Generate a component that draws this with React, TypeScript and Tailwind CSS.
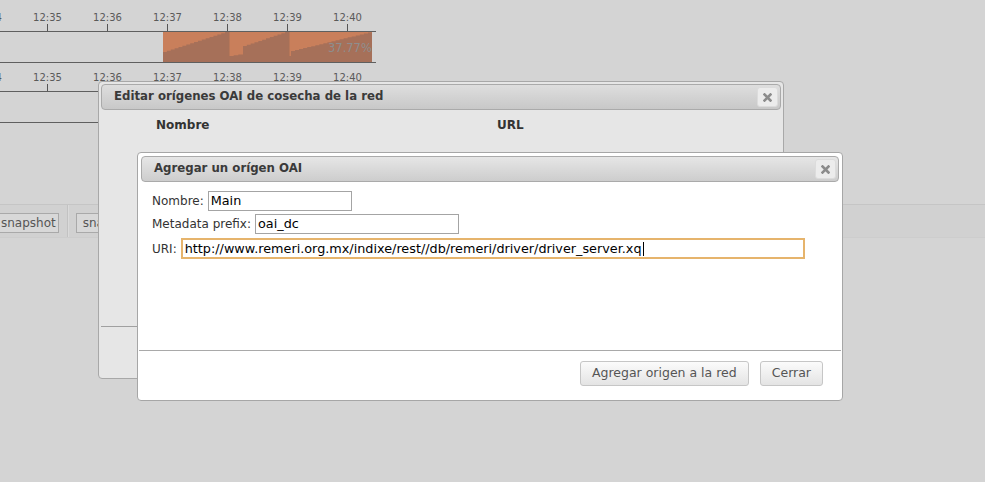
import React from "react";

const ticks = [-12.5, 47.5, 107.5, 167.5, 227.5, 287.5, 347.5];
const tickLabels = ["12:34", "12:35", "12:36", "12:37", "12:38", "12:39", "12:40"];

// staircase between two points, one step every `step` px
function stairs(x0: number, x1: number, y0: number, y1: number, step = 4) {
  const pts: string[] = [];
  const n = Math.max(1, Math.round((x1 - x0) / step));
  for (let i = 0; i < n; i++) {
    const xa = x0 + ((x1 - x0) * i) / n;
    const xb = x0 + ((x1 - x0) * (i + 1)) / n;
    const y = y0 + ((y1 - y0) * i) / (n - 1 || 1);
    pts.push(`${xa},${y}`, `${xb},${y}`);
  }
  return pts.join(" ");
}

function Charts() {
  const area = [
    "163,62",
    stairs(163, 229, 52, 32),
    "229,56",
    stairs(229, 243, 56, 54.5, 5),
    stairs(243, 289, 46, 32),
    "289,56",
    "291,56",
    stairs(291, 372, 51, 32.5),
    "372,62",
  ].join(" ");

  return (
    <svg width="376" height="124" className="block" fontFamily="'DejaVu Sans', sans-serif">
      {[0, 60].map((off) => (
        <g key={off} transform={`translate(0 ${off})`}>
          {ticks.map((x, i) => (
            <g key={x}>
              <text x={x} y={21} fontSize="10" fill="#5a5a5a" textAnchor="middle">
                {tickLabels[i]}
              </text>
              <line x1={x} x2={x} y1={24} y2={31} stroke="#555" strokeWidth="1" />
            </g>
          ))}
        </g>
      ))}
      <defs>
        <clipPath id="plot">
          <rect x="163" y="31" width="209" height="31" />
        </clipPath>
      </defs>
      <rect x="163" y="31.5" width="209" height="30.5" fill="#c97f5b" />
      <polygon points={area} fill="#a67059" />
      <line x1="229" x2="229" y1="32" y2="56" stroke="#a67059" />
      <line x1="289" x2="289" y1="32" y2="56" stroke="#a67059" />
      <g clipPath="url(#plot)">
        <text x="328" y="52" fontSize="11.5" fill="#8e8e8e">
          37.77%
        </text>
      </g>
      <line x1="0" x2="376" y1="31.5" y2="31.5" stroke="#5f5f5f" />
      <line x1="0" x2="376" y1="62.5" y2="62.5" stroke="#5f5f5f" />
      <line x1="0" x2="376" y1="91.5" y2="91.5" stroke="#5f5f5f" />
      <line x1="0" x2="376" y1="122.5" y2="122.5" stroke="#5f5f5f" />
    </svg>
  );
}

function CloseBox() {
  return (
    <div className="flex h-[20px] w-[21px] items-center justify-center rounded-[3px] border border-[#dcdcdc] bg-[#ececec]">
      <svg width="9" height="9" viewBox="0 0 9 9">
        <path d="M1.5 1.5 L7.5 7.5 M7.5 1.5 L1.5 7.5" stroke="#8c8c8c" strokeWidth="2.6" strokeLinecap="square" />
      </svg>
    </div>
  );
}

function Header({ title, tone }: { title: string; tone: "back" | "front" }) {
  return (
    <div
      className={
        "flex h-[26px] items-center justify-between rounded-[4px] border border-[#aaaaaa] pl-[12px] pr-[2px] " +
        (tone === "back" ? "bg-gradient-to-b from-[#dedede] to-[#c8c8c8]" : "bg-gradient-to-b from-[#e6e6e6] to-[#cdcdcd]")
      }
    >
      <span className="text-[11.75px] font-bold text-[#3a3a3a]">{title}</span>
      <CloseBox />
    </div>
  );
}

function Field({ label, width, value, focused }: { label: string; width: number; value: string; focused?: boolean }) {
  return (
    <div className="flex items-center text-[12px] text-[#333]">
      <span className="mr-[4px]">{label}</span>
      <div
        style={{ width }}
        className={
          "flex items-center bg-white px-[2px] text-[12.8px] text-black " +
          (focused ? "h-[21px] border-2 border-[#e6b46c]" : "h-[20px] border border-[#a4a4a4]")
        }
      >
        <span className="whitespace-nowrap">{value}</span>
        {focused && <span className="ml-px h-[14px] w-px bg-black" />}
      </div>
    </div>
  );
}

function Button({ children }: { children: React.ReactNode }) {
  return (
    <div className="flex h-[25px] items-center rounded-[3px] border border-[#c6c6c6] bg-gradient-to-b from-[#fbfbfb] to-[#e4e4e4] px-[11px] text-[12.5px] text-[#555]">
      {children}
    </div>
  );
}

export default function App() {
  return (
    <div className="relative h-[482px] w-[985px] overflow-hidden bg-[#d4d4d4] font-['DejaVu_Sans',sans-serif]">
      <Charts />

      {/* toolbar band behind the dialogs */}
      <div className="mt-[80px] flex h-[34px] items-stretch border-t border-b border-t-[#c5c5c5] border-b-[#cdcdcd] bg-[#d1d1d1]">
        <div className="flex items-center pr-[8px] pt-[3px]">
          <div className="-ml-[8px] flex h-[20px] items-center border border-[#a9a9a9] bg-[#d8d8d8] pl-[8px] pr-[2px] text-[12px] text-[#555]">
            snapshot
          </div>
        </div>
        <div className="w-px bg-[#c2c2c2]" />
        <div className="w-px bg-[#dadada]" />
        <div className="flex items-center pl-[7px] pt-[3px]">
          <div className="flex h-[20px] items-center border border-[#a9a9a9] bg-[#d8d8d8] px-[6px] text-[12px] text-[#555]">
            snapshot
          </div>
        </div>
      </div>

      {/* back dialog */}
      <div className="absolute left-[98px] top-[81px] flex h-[298px] w-[686px] flex-col rounded-[4px] border border-[#a8a8a8] bg-[#e6e6e6] p-[2px]">
        <Header title="Editar orígenes OAI de cosecha de la red" tone="back" />
        <div className="flex h-[216px] items-start pl-[55px] pt-[6px] text-[12px] font-bold text-[#333]">
          <span className="w-[341px]">Nombre</span>
          <span>URL</span>
        </div>
        <div className="border-t border-[#a0a0a0]" />
      </div>

      {/* front dialog */}
      <div className="absolute left-[137px] top-[152px] flex h-[249px] w-[706px] flex-col rounded-[4px] border border-[#a6a6a6] bg-white p-[3px]">
        <Header title="Agregar un orígen OAI" tone="front" />
        <div className="flex h-[168px] flex-col gap-[3px] pl-[11px] pt-[9px]">
          <Field label="Nombre:" width={144} value="Main" />
          <Field label="Metadata prefix:" width={204} value="oai_dc" />
          <div className="mt-[1px]">
            <Field label="URI:" width={624} value="http://www.remeri.org.mx/indixe/rest//db/remeri/driver/driver_server.xq" focused />
          </div>
        </div>
        <div className="-mx-[2px] flex justify-end gap-[11px] border-t border-[#a9a9a9] pr-[18px] pt-[10px]">
          <Button>Agregar origen a la red</Button>
          <Button>Cerrar</Button>
        </div>
      </div>
    </div>
  );
}
